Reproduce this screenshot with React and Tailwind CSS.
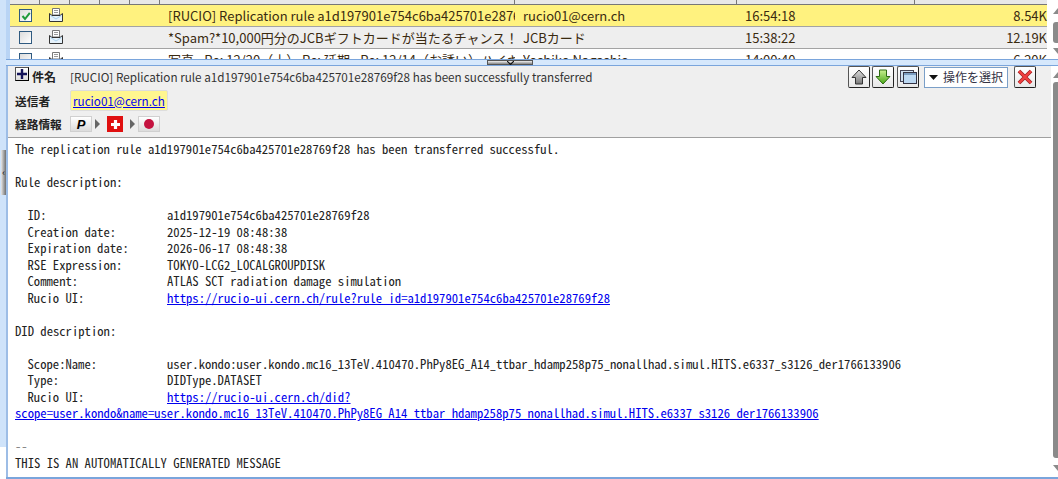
const ui = '"Noto Sans CJK JP","Noto Sans",sans-serif';
const mono = '"Noto Sans Mono CJK JP","Liberation Mono",monospace';

function Check({ on }) {
  return (
    <span className="flex h-[13px] w-[13px] items-center justify-center border border-[#2f5a80] bg-gradient-to-br from-[#dcdcdc] to-white">
      {on && (
        <svg width="10" height="10" viewBox="0 0 10 10">
          <path d="M1.5 5 L4 8 L8.8 1.8" fill="none" stroke="#1f9a3a" strokeWidth="2" />
        </svg>
      )}
    </span>
  );
}

function MailIcon() {
  return (
    <svg width="14" height="14" viewBox="0 0 14 14">
      <path d="M3.5 .5H10.5V7H3.5Z" fill="#fff" stroke="#777" />
      <path d="M5 2.5H9M5 4.5H9" stroke="#999" />
      <path d="M.5 5.5V13.5H13.5V5.5L11 7.5H3L.5 5.5Z" fill="#e6f2fb" stroke="#333" />
      <path d="M1.5 7L7 10.5L12.5 7V8L7 11.5L1.5 8Z" fill="#a8d0ee" />
    </svg>
  );
}

function Row({ on, bg, sub, from, time, size }) {
  return (
    <div className={`flex h-[22px] shrink-0 items-start border-b border-[#a3a3a3] text-[13px] text-[#3a2a10] ${bg}`}>
      <div className="ml-[9px] w-[13px] shrink-0 pt-[4px]"><Check on={on} /></div>
      <div className="ml-[17px] w-[14px] shrink-0 pt-[3px]"><MailIcon /></div>
      <div className="w-[105px] shrink-0" />
      <div className="mr-[8px] w-[347px] shrink-0 overflow-hidden whitespace-nowrap pt-[1px]">{sub}</div>
      <div className="w-[222px] shrink-0 overflow-hidden whitespace-nowrap pt-[1px]">{from}</div>
      <div className="w-[232px] shrink-0 whitespace-nowrap pt-[1px]">{time}</div>
      <div className="flex-1 whitespace-nowrap pt-[1px] text-right">{size}</div>
    </div>
  );
}

function ToolBtn({ children }) {
  return (
    <span className="flex h-[22px] w-[22px] items-center justify-center rounded-[2px] border border-[#555] border-b-[#222] border-r-[#222] bg-gradient-to-b from-white to-[#e8e8e8]">
      {children}
    </span>
  );
}

function Arrow({ up, a, b }) {
  return (
    <svg width="16" height="16" viewBox="0 0 16 16">
      <defs>
        <linearGradient id={a} x1="0" y1="0" x2="0" y2="1">
          <stop offset="0" stopColor={a === "gu" ? "#e0e0e0" : "#c8f090"} />
          <stop offset="1" stopColor={b} />
        </linearGradient>
      </defs>
      <path
        d={up ? "M8 1L15 8.5H11.5V15H4.5V8.5H1Z" : "M8 15L15 7.5H11.5V1H4.5V7.5H1Z"}
        fill={`url(#${a})`}
        stroke={up ? "#333" : "#2d6a12"}
      />
    </svg>
  );
}

function RouteBtn({ children }) {
  return (
    <span className="flex h-[16px] w-[22px] items-center justify-center border border-[#d0d0d0] bg-gradient-to-b from-white to-[#dcdcdc]">
      {children}
    </span>
  );
}

const Tri = ({ className }) => (
  <svg width="5" height="10" viewBox="0 0 5 10" className={className}><path d="M0 0L5 5L0 10Z" fill="#666" /></svg>
);

const A = ({ children }) => <a className="text-[#0000ee] underline">{children}</a>;

function Line({ label, children }) {
  return (
    <div className="flex pl-[12.5px]">
      <span className="w-[139.5px] shrink-0">{label}</span>
      <span>{children}</span>
    </div>
  );
}

function ScrollTri({ up }) {
  return (
    <svg width="5" height="6" viewBox="0 0 5 6" className="shrink-0">
      <path d={up ? "M5 0V6H0Z" : "M0 0H5V6Z"} fill="#8a8a8a" />
    </svg>
  );
}

export default function App() {
  return (
    <div className="flex h-[479px] w-[1058px] overflow-hidden bg-white" style={{ fontFamily: ui }}>
      {/* left collapse strip */}
      <div className="h-[447px] w-[6px] shrink-0 bg-[#cfe3fa] pt-[150px]">
        <div className="ml-[1px] flex h-[45px] w-[5px] items-center justify-center bg-gradient-to-r from-[#e8e8e8] to-[#707070] text-[9px] leading-none text-black">‹</div>
      </div>
      <div className="flex min-w-0 flex-1 flex-col">
        {/* message list */}
        <div className="flex h-[59px] shrink-0 overflow-hidden">
          <div className="flex w-[1041px] shrink-0 flex-col overflow-hidden border-l-[4px] border-[#b9d4f5] bg-white">
            <div className="flex h-[5px] shrink-0 border-b border-[#777] bg-[#e8e8e8]">
              {[30, 30, 30, 30, 30, 355, 222, 178].map((w, i) => (
                <div key={i} className="shrink-0 border-r border-[#777]" style={{ width: w }} />
              ))}
            </div>
            <Row on bg="bg-[#fff27f]" sub="[RUCIO] Replication rule a1d197901e754c6ba425701e28769f28 has been" from="rucio01@cern.ch" time="16:54:18" size="8.54K" />
            <Row bg="bg-[#eeeeee]" sub="*Spam?*10,000円分のJCBギフトカードが当たるチャンス！" from="JCBカード" time="15:38:22" size="12.19K" />
            <Row bg="bg-white" sub="写真 - Re: 12/20（土） Re: 延期 - Re: 12/14（お誘い）ハイキング" from="Yoshiko Nagashio" time="14:00:40" size="6.20K" />
          </div>
          <div className="flex flex-1 flex-col items-end bg-white pt-[8px]">
            <ScrollTri up />
            <div className="mt-[8px] h-[21px] w-[5px] rounded-l-[3px] bg-[#8a8a8a]" />
            <div className="mt-[5px]"><ScrollTri /></div>
          </div>
        </div>
        {/* splitter */}
        <div className="relative h-[7px] shrink-0 border-y border-[#7aa5dc] bg-[#d6e8fc]">
          <div className="absolute left-[481px] top-0 flex h-[5px] w-[46px] justify-center border border-[#555] bg-gradient-to-b from-[#f0f0f0] to-[#888]">
            <svg width="7" height="4" viewBox="0 0 7 4"><path d="M0 0L3.5 3.5L7 0" fill="none" stroke="#111" strokeWidth="1.2" /></svg>
          </div>
        </div>
        {/* lower part */}
        <div className="flex min-h-0 flex-1 border-b-[2px] border-[#7aa5dc]">
          <div className="flex w-[1045px] shrink-0 flex-col border-l-[2px] border-[#9dbde6]">
            {/* header */}
            <div className="flex h-[72px] shrink-0 flex-col border-b border-[#a0a0a0] bg-[#efefef] pl-[7px] text-[11.7px] text-[#222]">
              <div className="flex h-[24px] shrink-0 items-start">
                <span className="mt-[1px] flex h-[14px] w-[14px] shrink-0 items-center justify-center border border-[#555] border-b-black border-r-black bg-gradient-to-b from-white to-[#ddd]">
                  <svg width="12" height="12" viewBox="0 0 12 12"><path d="M6 1V11M1 6H11" stroke="#14145a" strokeWidth="2.4" /></svg>
                </span>
                <span className="ml-[3px] mt-[2px] w-[38px] shrink-0 text-[12px] font-bold leading-[18px] text-[#222]">件名</span>
                <span className="mt-[2px] whitespace-nowrap leading-[18px] text-[#333]">[RUCIO] Replication rule a1d197901e754c6ba425701e28769f28 has been successfully transferred</span>
                <div className="ml-auto mr-[15px] flex items-center">
                  <ToolBtn><Arrow up a="gu" b="#777" /></ToolBtn>
                  <span className="ml-[2px]"><ToolBtn><Arrow a="gd" b="#4aa818" /></ToolBtn></span>
                  <span className="ml-[3px]">
                    <ToolBtn>
                      <svg width="17" height="15" viewBox="0 0 17 15">
                        <rect x=".5" y=".5" width="13" height="11" fill="#cfe0f0" stroke="#445" />
                        <rect x="3.5" y="2.5" width="13" height="11" fill="#bcd8f2" stroke="#334" />
                        <rect x="4" y="3" width="12" height="2" fill="#7a9cc0" />
                      </svg>
                    </ToolBtn>
                  </span>
                  <span className="ml-[5px] flex h-[21px] w-[84px] items-center justify-center gap-[5px] border border-[#7a9fc8] bg-white text-[12px] leading-none text-[#334]">
                    <svg width="9" height="5" viewBox="0 0 9 5"><path d="M0 0H9L4.5 5Z" fill="#111" /></svg>
                    操作を選択
                  </span>
                  <span className="ml-[6px]">
                    <ToolBtn>
                      <svg width="18" height="18" viewBox="0 0 18 18">
                        <path d="M3 3L15 15M15 3L3 15" stroke="#a02020" strokeWidth="3.8" />
                        <path d="M3 3L15 15M15 3L3 15" stroke="#f04040" strokeWidth="2.4" />
                      </svg>
                    </ToolBtn>
                  </span>
                </div>
              </div>
              <div className="flex h-[21px] shrink-0 items-center">
                <span className="w-[55px] shrink-0 font-bold">送信者</span>
                <span className="flex h-[21px] items-center rounded-[2px] border border-[#ddd] bg-[#fff68f] px-[2px]"><a className="text-[#0000ee] underline">rucio01@cern.ch</a></span>
              </div>
              <div className="flex h-[26px] shrink-0 items-center">
                <span className="w-[55px] shrink-0 font-bold">経路情報</span>
                <RouteBtn><span className="text-[13px] font-black italic leading-none text-black" style={{ fontFamily: '"Liberation Sans",sans-serif' }}>P</span></RouteBtn>
                <Tri className="ml-[3px] mr-[7px]" />
                <span className="flex h-[16px] w-[16px] items-center justify-center bg-[#e01010]">
                  <svg width="11" height="11" viewBox="0 0 11 11"><path d="M5.5 1V10M1 5.5H10" stroke="#fff" strokeWidth="3.2" /></svg>
                </span>
                <Tri className="ml-[7px] mr-[3px]" />
                <RouteBtn><span className="h-[10px] w-[10px] rounded-full bg-[#c4123f]" /></RouteBtn>
              </div>
            </div>
            {/* body */}
            <div className="min-h-0 flex-1 overflow-hidden whitespace-pre bg-white pl-[7px] pt-[3px] text-[12.67px] leading-[16.5px] text-[#222]" style={{ fontFamily: mono }}>
              <div>The replication rule a1d197901e754c6ba425701e28769f28 has been transferred successful.</div>
              <div className="h-[16.5px]" />
              <div>Rule description:</div>
              <div className="h-[16.5px]" />
              <Line label="ID:">a1d197901e754c6ba425701e28769f28</Line>
              <Line label="Creation date:">2025-12-19 08:48:38</Line>
              <Line label="Expiration date:">2026-06-17 08:48:38</Line>
              <Line label="RSE Expression:">TOKYO-LCG2_LOCALGROUPDISK</Line>
              <Line label="Comment:">ATLAS SCT radiation damage simulation</Line>
              <Line label="Rucio UI:"><A>https://rucio-ui.cern.ch/rule?rule_id=a1d197901e754c6ba425701e28769f28</A></Line>
              <div className="h-[16.5px]" />
              <div>DID description:</div>
              <div className="h-[16.5px]" />
              <Line label="Scope:Name:">user.kondo:user.kondo.mc16_13TeV.410470.PhPy8EG_A14_ttbar_hdamp258p75_nonallhad.simul.HITS.e6337_s3126_der1766133906</Line>
              <Line label="Type:">DIDType.DATASET</Line>
              <Line label="Rucio UI:"><A>https://rucio-ui.cern.ch/did?</A></Line>
              <div><A>scope=user.kondo&amp;name=user.kondo.mc16_13TeV.410470.PhPy8EG_A14_ttbar_hdamp258p75_nonallhad.simul.HITS.e6337_s3126_der1766133906</A></div>
              <div className="h-[16.5px]" />
              <div className="text-[#888]">--</div>
              <div>THIS IS AN AUTOMATICALLY GENERATED MESSAGE</div>
            </div>
          </div>
          <div className="flex flex-1 flex-col items-end bg-white pt-[6px]">
            <ScrollTri up />
            <div className="mt-[4px] h-[376px] w-[5px] rounded-l-[3px] bg-[#8a8a8a]" />
            <div className="mt-[7px]"><ScrollTri /></div>
          </div>
        </div>
      </div>
    </div>
  );
}
